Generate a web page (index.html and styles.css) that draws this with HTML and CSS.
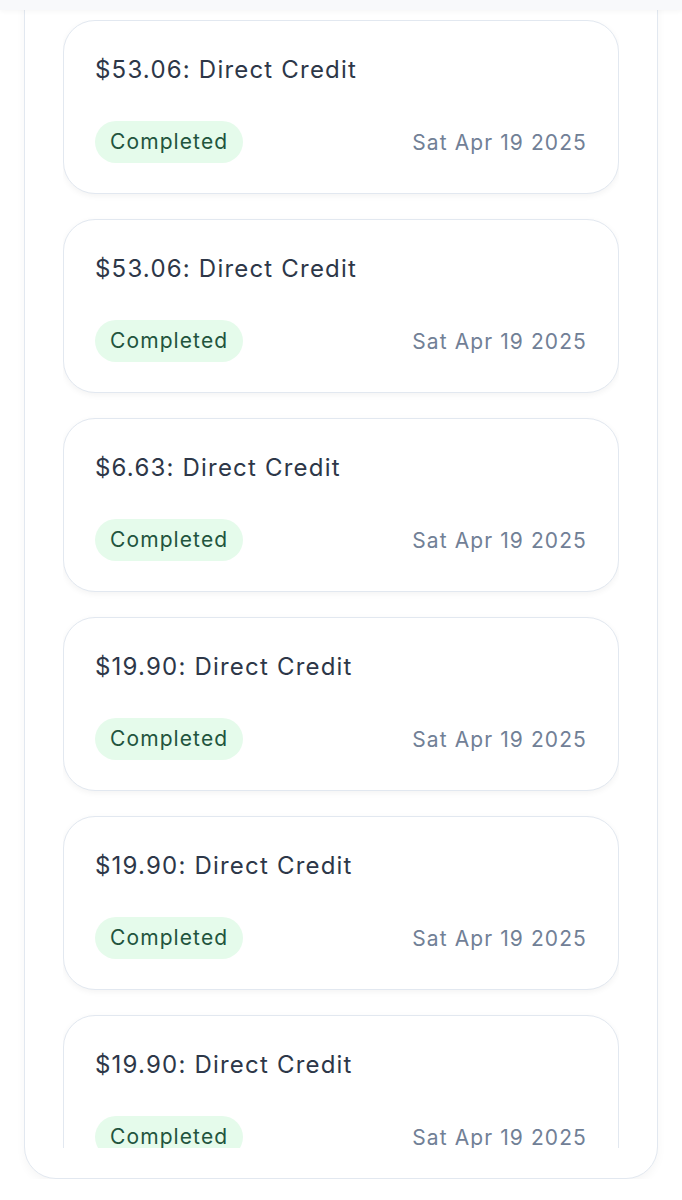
FILE: index.html
```html
<!DOCTYPE html>
<html lang="en">
<head>
  <meta charset="UTF-8">
  <title>Transactions</title>
  <link rel="stylesheet" href="styles.css">
</head>
<body>
  <div class="topbar"></div>
  <div class="panel">
    <div class="list">
      <div class="card">
        <div class="title">$53.06: Direct Credit</div>
        <div class="meta">
          <span class="badge">Completed</span>
          <span class="date">Sat Apr 19 2025</span>
        </div>
      </div>
      <div class="card">
        <div class="title">$53.06: Direct Credit</div>
        <div class="meta">
          <span class="badge">Completed</span>
          <span class="date">Sat Apr 19 2025</span>
        </div>
      </div>
      <div class="card">
        <div class="title">$6.63: Direct Credit</div>
        <div class="meta">
          <span class="badge">Completed</span>
          <span class="date">Sat Apr 19 2025</span>
        </div>
      </div>
      <div class="card">
        <div class="title">$19.90: Direct Credit</div>
        <div class="meta">
          <span class="badge">Completed</span>
          <span class="date">Sat Apr 19 2025</span>
        </div>
      </div>
      <div class="card">
        <div class="title">$19.90: Direct Credit</div>
        <div class="meta">
          <span class="badge">Completed</span>
          <span class="date">Sat Apr 19 2025</span>
        </div>
      </div>
      <div class="card">
        <div class="title">$19.90: Direct Credit</div>
        <div class="meta">
          <span class="badge">Completed</span>
          <span class="date">Sat Apr 19 2025</span>
        </div>
      </div>
    </div>
  </div>
</body>
</html>
```

FILE: styles.css
```css
body {
  margin: 0;
  font-family: Inter, "Noto Sans", sans-serif;
  background: #fff;
}
.topbar {
  position: fixed;
  top: 0;
  left: 0;
  right: 0;
  height: 10px;
  background: #f8f9fb;
  box-shadow: 0 2px 4px rgba(0, 0, 0, 0.03);
  z-index: 2;
}
.panel {
  margin: -40px 24px 0;
  padding: 59px 38px 30px;
  border: 1.5px solid #e2e8f0;
  border-radius: 32px;
  background: #fff;
  box-shadow: 0 4px 10px rgba(0, 0, 0, 0.04);
}
.list {
  height: 1128px;
  overflow: hidden;
  display: flex;
  flex-direction: column;
  gap: 25px;
}
.card {
  flex-shrink: 0;
  height: 174px;
  box-sizing: border-box;
  padding: 33px 31px 30px 31px;
  border: 1.5px solid #e2e8f0;
  border-radius: 32px;
  background: #fff;
  box-shadow: 0 2px 6px rgba(0, 0, 0, 0.05);
  display: flex;
  flex-direction: column;
  justify-content: space-between;
}
.title {
  font-size: 24px;
  line-height: 32px;
  letter-spacing: 1.2px;
  color: #2d3748;
}
.meta {
  display: flex;
  align-items: center;
  justify-content: space-between;
}
.badge {
  padding: 0 15px;
  height: 42px;
  line-height: 42px;
  border-radius: 21px;
  background: #e5fbeb;
  color: #22543d;
  font-size: 21px;
  letter-spacing: 1.1px;
}
.date {
  font-size: 21px;
  letter-spacing: 1.1px;
  color: #718096;
}
```
